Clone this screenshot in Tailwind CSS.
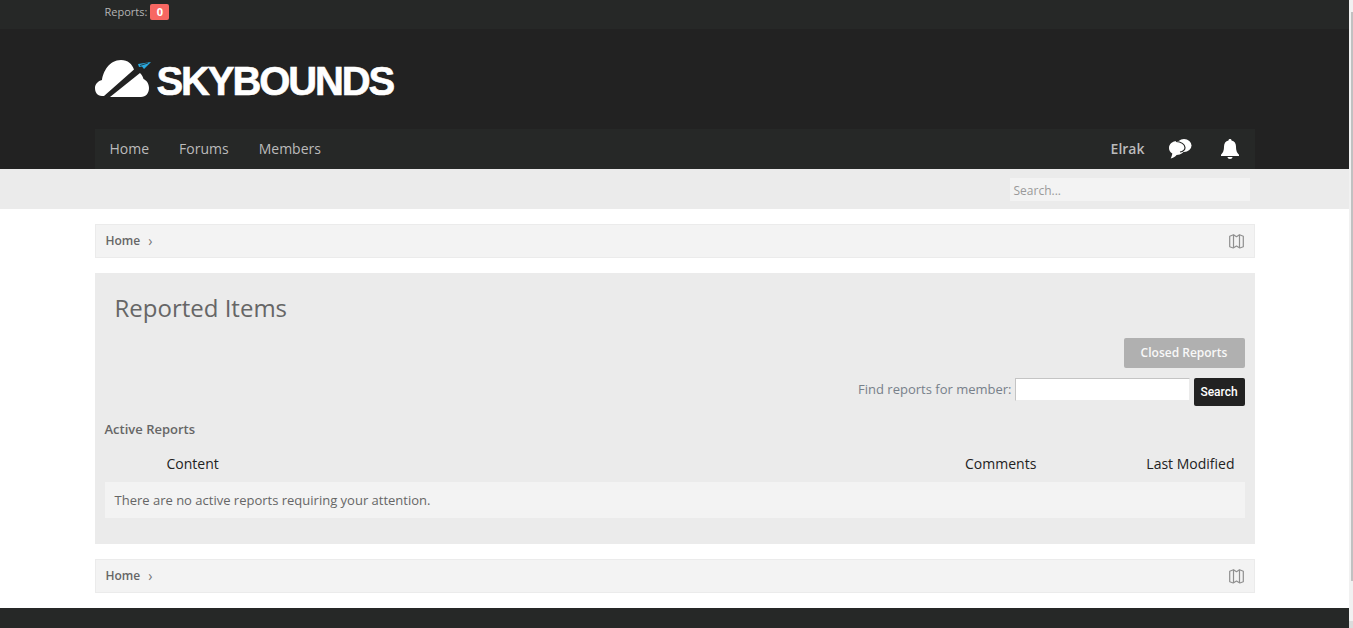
<!DOCTYPE html>
<html lang="en">
<head>
    <meta charset="UTF-8">
    <meta name="viewport" content="width=device-width, initial-scale=1.0">
    <title>Skybounds - Reported Items</title>
    <script src="https://cdn.jsdelivr.net/npm/@tailwindcss/browser@4"></script>
</head>
<body class="h-[628px] overflow-hidden bg-white font-['Open_Sans','Noto_Sans',sans-serif]">
<div class="flex h-[628px]">
    <div class="w-[1349px] shrink-0 flex flex-col h-[628px] overflow-hidden">
        <!-- Moderator bar -->
        <div class="h-[29px] shrink-0 bg-[#262827]">
            <div class="w-[1160px] mx-auto pl-[10px] pt-1 flex items-center text-[11px] leading-4 text-[#b5b5b5]">
                <span>Reports:</span>
                <span class="ml-[3px] w-[19px] h-4 bg-[#f76762] rounded-[2px] text-white font-bold text-center text-[11px]">0</span>
            </div>
        </div>

        <!-- Header -->
        <div class="h-[100px] shrink-0 bg-[#222222]">
            <div class="w-[1160px] mx-auto pt-[31px] flex items-start">
                <svg class="w-[56px] h-[38px] shrink-0" viewBox="0 0 56 38">
                    <path fill="#ffffff" d="M7 36C2 36 0 32 0 28C0 24 3 21 7 20C8 12 14 0 26 0C33 0 37 4 39 9.500L9 36z"/>
                    <path fill="#ffffff" d="M45 13L15 37H46C51 37 54 33 54 28C54 23 51 20 48.500 19C48 17 47 15 45 13z"/>
                    <path fill="#29a9df" d="M43 4L56 2L49 9L47 6.500L44 7z"/>
                    <path fill="none" stroke="#222222" stroke-width="0.800" d="M45 5.500L53 3"/>
                </svg>
                <span class="ml-[6px] mt-[6px] text-[40px] leading-[30px] font-['Liberation_Sans',sans-serif] font-bold tracking-[-2.100px] text-white [-webkit-text-stroke:0.600px_white]">SKYBOUNDS</span>
            </div>
        </div>

        <!-- Nav -->
        <div class="h-10 shrink-0 bg-[#222222]">
            <div class="w-[1160px] h-10 mx-auto bg-[#262827] flex items-center text-sm text-[#bbbbbb]">
                <a class="ml-[15px]">Home</a>
                <a class="ml-[30px]">Forums</a>
                <a class="ml-[30px]">Members</a>
                <a class="ml-auto font-semibold">Elrak</a>
                <svg class="ml-6 w-[23px] h-5" viewBox="0 0 23 20" fill="#ffffff">
                    <ellipse cx="15" cy="6.500" rx="7.500" ry="6.500"/>
                    <path d="M8 2C3.500 2 0 5 0 9c0 2.400 1.300 4.300 3.300 5.600C3.100 16.500 2.500 18 1.700 19.500c2.200-.4 4.500-1.800 5.900-3.500C12 16 16 13 16 9c0-4-3.500-7-8-7z"/>
                    <path fill="none" stroke="#262827" stroke-width="1.200" d="M7 2.500C12 2.500 16 5.500 16 8.500C16 10.500 14 12.500 11 13"/>
                </svg>
                <svg class="ml-[28px] mr-[15px] w-[20px] h-5" viewBox="0 0 20 20" fill="#ffffff">
                    <path d="M10 0c-1 0-1.500.6-1.500 1.400C5.500 2 4 4.300 4 7.500c0 4.500-1.200 6.500-3 8.200V17h18v-1.300c-1.800-1.700-3-3.700-3-8.200 0-3.200-1.500-5.500-4.500-6.100C11.500.6 11 0 10 0z"/>
                    <path d="M7.500 18h5c0 1.200-1.100 2-2.500 2s-2.500-.8-2.500-2z"/>
                </svg>
            </div>
        </div>

        <!-- Search strip -->
        <div class="h-10 shrink-0 bg-[#ebebeb]">
            <div class="w-[1160px] mx-auto flex justify-end pt-[9px] pr-[5px]">
                <div class="w-[240px] h-[23px] bg-[#f3f3f3] pl-1 text-xs leading-[25px] text-[#9a9a9a]">Search...</div>
            </div>
        </div>

        <div class="w-[1160px] mx-auto flex-1">
            <!-- Breadcrumb -->
            <div class="mt-[15px] h-[34px] bg-[#f3f3f3] border border-[#ebebeb] flex items-center pl-[10px] pr-[10px] text-xs font-semibold text-[#666666]">
                <span>Home</span>
                <span class="ml-2 font-normal text-sm text-[#777777]">›</span>
                <svg class="ml-auto mt-[1px] w-[15px] h-[15px]" viewBox="0 0 15 15" fill="none" stroke="#8f8f8f" stroke-width="1.200" stroke-linejoin="round">
                    <path d="M.7 2.200L4.500 .8L7.500 2.700L10.500 .8L14.300 2.200V12.800L10.800 14L7.500 12L4.200 14L.7 12.800z"/>
                    <path d="M4.500 .8V14M10.500 .8V14"/>
                </svg>
            </div>

            <!-- Reports panel -->
            <div class="mt-[15px] h-[271px] bg-[#ebebeb] px-[10px] pt-[19px]">
                <h1 class="pl-[10px] text-2xl leading-[32px] text-[#666666]">Reported Items</h1>
                <div class="mt-[14px] flex justify-end">
                    <a class="w-[121px] h-[30px] bg-[#b0b0b0] rounded-[2px] text-center text-xs font-semibold leading-[30px] text-[#f8f8f8]">Closed Reports</a>
                </div>
                <div class="mt-[10px] flex justify-end items-start">
                    <span class="text-[13px] leading-[22px] text-[#77808a]">Find reports for member:</span>
                    <div class="ml-[3px] w-[175px] h-[23px] bg-white border border-[#c4c4c4] border-r-[#ebebeb] border-b-[#ebebeb]"></div>
                    <button class="ml-1 w-[51px] h-7 bg-[#222222] rounded-[2px] text-white text-xs font-medium font-['Roboto',sans-serif]">Search</button>
                </div>
                <div class="mt-[13px] text-[13px] leading-[20px] font-semibold text-[#666666]">Active Reports</div>
                <div class="mt-[10px] h-[30px] flex items-center text-sm text-[#222222]">
                    <span class="ml-[62px]">Content</span>
                    <span class="ml-auto">Comments</span>
                    <span class="ml-[110px] mr-[10px]">Last Modified</span>
                </div>
                <div class="mt-[3px] h-9 bg-[#f3f3f3] pl-[10px] text-[13px] leading-9 text-[#666666]">There are no active reports requiring your attention.</div>
            </div>

            <!-- Breadcrumb bottom -->
            <div class="mt-[15px] h-[34px] bg-[#f3f3f3] border border-[#ebebeb] flex items-center pl-[10px] pr-[10px] text-xs font-semibold text-[#666666]">
                <span>Home</span>
                <span class="ml-2 font-normal text-sm text-[#777777]">›</span>
                <svg class="ml-auto mt-[1px] w-[15px] h-[15px]" viewBox="0 0 15 15" fill="none" stroke="#8f8f8f" stroke-width="1.200" stroke-linejoin="round">
                    <path d="M.7 2.200L4.500 .8L7.500 2.700L10.500 .8L14.300 2.200V12.800L10.800 14L7.500 12L4.200 14L.7 12.800z"/>
                    <path d="M4.500 .8V14M10.500 .8V14"/>
                </svg>
            </div>
        </div>

        <!-- Footer -->
        <div class="h-5 shrink-0 bg-[#262827]"></div>
    </div>

    <!-- Scrollbar -->
    <div class="w-1 h-[628px] bg-[#f1f1f1] flex flex-col">
        <div class="mt-3 ml-[2px] w-[2px] h-[569px] bg-[#c1c1c1]"></div>
        <div class="mt-auto h-[7px] bg-[#dcdcdc]"></div>
    </div>
</div>
</body>
</html>
